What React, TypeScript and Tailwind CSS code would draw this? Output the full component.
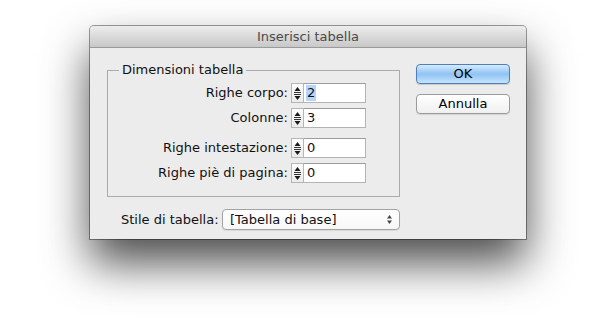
import type { ReactNode } from "react";

type Field = {
  label: string;
  value: string;
  selected?: boolean;
};

const bodyFields: Field[] = [
  { label: "Righe corpo:", value: "2", selected: true },
  { label: "Colonne:", value: "3" },
];

const headerFields: Field[] = [
  { label: "Righe intestazione:", value: "0" },
  { label: "Righe piè di pagina:", value: "0" },
];

function Stepper() {
  return (
    <div className="w-[13px] h-[20px] border border-[#b5b5b5] bg-gradient-to-b from-[#fdfdfd] to-[#ececec] flex items-center justify-center">
      <svg width="9" height="16" viewBox="0 0 9 16">
        <path d="M4.5 2 L7.5 6 L1.5 6 Z" fill="#1a1a1a" />
        <rect x="1" y="7" width="7" height="1" fill="#333" />
        <rect x="1" y="9" width="7" height="1" fill="#333" />
        <path d="M1.5 11 L7.5 11 L4.5 15 Z" fill="#1a1a1a" />
      </svg>
    </div>
  );
}

function NumberRow({ field }: { field: Field }) {
  return (
    <div className="flex items-center justify-end h-[20px]">
      <span className="mr-[3px]">{field.label}</span>
      <Stepper />
      <div className="w-[62px] h-[20px] bg-white border border-[#b3b3b3] border-t-[#9c9c9c] border-l-0 flex items-center pl-[2px]">
        <span className={field.selected ? "bg-[#b5d5ff] px-[1px] leading-[16px]" : "px-[1px] leading-[16px]"}>
          {field.value}
        </span>
      </div>
    </div>
  );
}

function MacButton({ children, primary }: { children: ReactNode; primary?: boolean }) {
  return (
    <button
      className={
        primary
          ? "w-[94px] h-[20px] rounded-[4px] border border-[#4f7fb8] bg-gradient-to-b from-[#d6ebfd] via-[#8fc3f4] to-[#c5e4fd] text-black shadow-[0_1px_1px_rgba(0,0,0,0.15)] leading-[18px]"
          : "w-[94px] h-[20px] rounded-[4px] border border-[#9b9b9b] bg-gradient-to-b from-white to-[#f0f0f0] text-black shadow-[0_1px_1px_rgba(0,0,0,0.1)] leading-[18px]"
      }
    >
      {children}
    </button>
  );
}

export default function App() {
  return (
    <div
      className="w-[600px] h-[318px] bg-white pl-[90px] pt-[26px] overflow-hidden text-[13px] text-[#111]"
      style={{ fontFamily: '"DejaVu Sans", "Liberation Sans", sans-serif' }}
    >
      <div className="w-[436px] h-[213px] bg-[#ececec] rounded-t-[4px] shadow-[0_0_0_1px_rgba(0,0,0,0.38),0_24px_45px_rgba(0,0,0,0.7)] flex flex-col">
        <div className="h-[22px] rounded-t-[4px] bg-gradient-to-b from-[#ededed] to-[#c8c8c8] border-b border-[#9a9a9a] flex items-center justify-center text-[#4a4a4a]">
          Inserisci tabella
        </div>

        <div className="flex">
          <fieldset className="ml-[17px] mt-[14px] w-[293px] border border-[#ababab] pr-[33px] pt-[5px] pb-[13px] flex flex-col">
            <legend className="ml-[11px] px-[3px] leading-[16px]">Dimensioni tabella</legend>
            <div className="flex flex-col gap-[5px]">
              {bodyFields.map(f => (
                <NumberRow key={f.label} field={f} />
              ))}
            </div>
            <div className="flex flex-col gap-[5px] mt-[10px]">
              {headerFields.map(f => (
                <NumberRow key={f.label} field={f} />
              ))}
            </div>
          </fieldset>

          <div className="ml-auto mr-[16px] mt-[16px] flex flex-col gap-[10px]">
            <MacButton primary>OK</MacButton>
            <MacButton>Annulla</MacButton>
          </div>
        </div>

        <div className="flex items-center mt-[12px] pl-[31px]">
          <span className="w-[101px] whitespace-nowrap">Stile di tabella:</span>
          <div className="w-[178px] h-[21px] rounded-[4px] border border-[#a3a3a3] bg-gradient-to-b from-white to-[#f7f7f7] shadow-[0_1px_1px_rgba(0,0,0,0.08)] flex items-center pl-[7px] pr-[6px]">
            <span className="flex-1">[Tabella di base]</span>
            <svg width="7" height="11" viewBox="0 0 7 11">
              <path d="M3.5 1 L6 4.5 L1 4.5 Z" fill="#444" />
              <path d="M1 6.5 L6 6.5 L3.5 10 Z" fill="#444" />
            </svg>
          </div>
        </div>
      </div>
    </div>
  );
}
